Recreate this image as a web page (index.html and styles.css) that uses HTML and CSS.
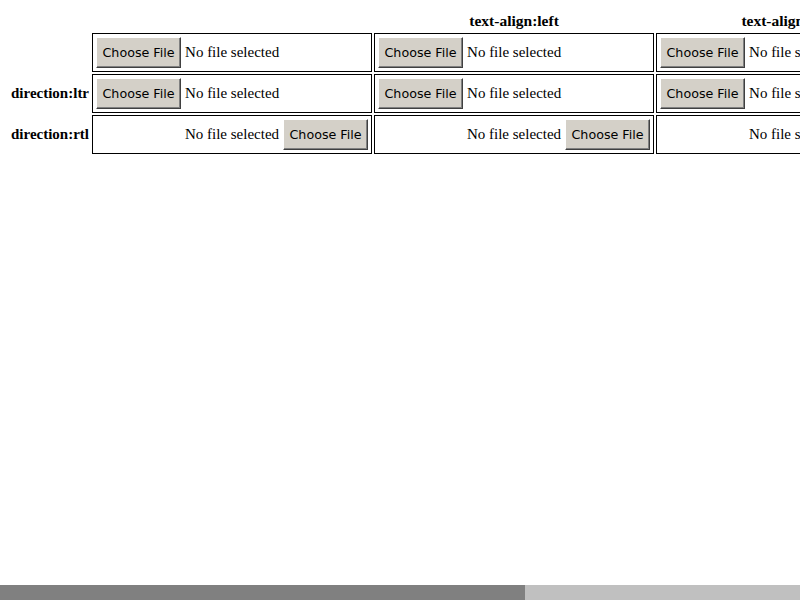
FILE: index.html
```html
<!DOCTYPE html>
<html>
<head>
<meta charset="utf-8">
<title>file input text-align</title>
<link rel="stylesheet" href="styles.css">
</head>
<body>
<table class="grid">
  <tr>
    <th class="label"></th>
    <th class="head"></th>
    <th class="head">text-align:left</th>
    <th class="head">text-align:center</th>
    <th class="head">text-align:right</th>
  </tr>
  <tr>
    <th class="label"></th>
    <td class="cell"><span class="file"><span class="btn">Choose File</span><span class="name">No file selected</span></span></td>
    <td class="cell"><span class="file"><span class="btn">Choose File</span><span class="name">No file selected</span></span></td>
    <td class="cell"><span class="file"><span class="btn">Choose File</span><span class="name">No file selected</span></span></td>
    <td class="cell"><span class="file"><span class="btn">Choose File</span><span class="name">No file selected</span></span></td>
  </tr>
  <tr>
    <th class="label">direction:ltr</th>
    <td class="cell"><span class="file"><span class="btn">Choose File</span><span class="name">No file selected</span></span></td>
    <td class="cell"><span class="file"><span class="btn">Choose File</span><span class="name">No file selected</span></span></td>
    <td class="cell"><span class="file"><span class="btn">Choose File</span><span class="name">No file selected</span></span></td>
    <td class="cell"><span class="file"><span class="btn">Choose File</span><span class="name">No file selected</span></span></td>
  </tr>
  <tr>
    <th class="label">direction:rtl</th>
    <td class="cell rtl"><span class="file"><span class="btn">Choose File</span><span class="name">No file selected</span></span></td>
    <td class="cell rtl"><span class="file"><span class="btn">Choose File</span><span class="name">No file selected</span></span></td>
    <td class="cell rtl"><span class="file"><span class="btn">Choose File</span><span class="name">No file selected</span></span></td>
    <td class="cell rtl"><span class="file"><span class="btn">Choose File</span><span class="name">No file selected</span></span></td>
  </tr>
</table>
<div class="hscroll"><div class="thumb"></div></div>
</body>
</html>
```

FILE: styles.css
```css
html {
  overflow: hidden;
  background: #fff;
}
body {
  margin: 8px;
  font-family: "Liberation Serif", "Times New Roman", serif;
  font-size: 15px;
  color: #000;
  width: 1220px;
}
.grid {
  border-collapse: separate;
  border-spacing: 2px;
  table-layout: fixed;
}
.grid th {
  font-weight: bold;
  padding: 1px;
  line-height: 19px;
  white-space: nowrap;
}
.label {
  width: 78px;
  text-align: center;
}
.head {
  width: 278px;
  text-align: center;
}
.grid .head {
  font-size: 15.5px;
}
.cell {
  width: 272px;
  padding: 3px;
  border: 1px solid #000;
  text-align: left;
  white-space: nowrap;
  overflow: hidden;
}
.cell.rtl {
  text-align: right;
}
.file {
  display: inline-flex;
  align-items: center;
  vertical-align: middle;
}
.rtl .file {
  flex-direction: row-reverse;
}
.btn {
  display: inline-flex;
  align-items: center;
  justify-content: center;
  box-sizing: border-box;
  width: 85px;
  height: 31px;
  background: #d4d0c8;
  border: 1px solid;
  border-color: #ffffff #404040 #404040 #ffffff;
  box-shadow: inset -1px -1px 0 #808080;
  font-family: "DejaVu Sans", sans-serif;
  font-size: 12.7px;
  color: #000;
}
.name {
  margin: 0 4px;
}
.hscroll {
  position: fixed;
  left: 0;
  bottom: 0;
  width: 800px;
  height: 15px;
  background: #c0c0c0;
}
.thumb {
  width: 525px;
  height: 15px;
  background: #808080;
}
```
